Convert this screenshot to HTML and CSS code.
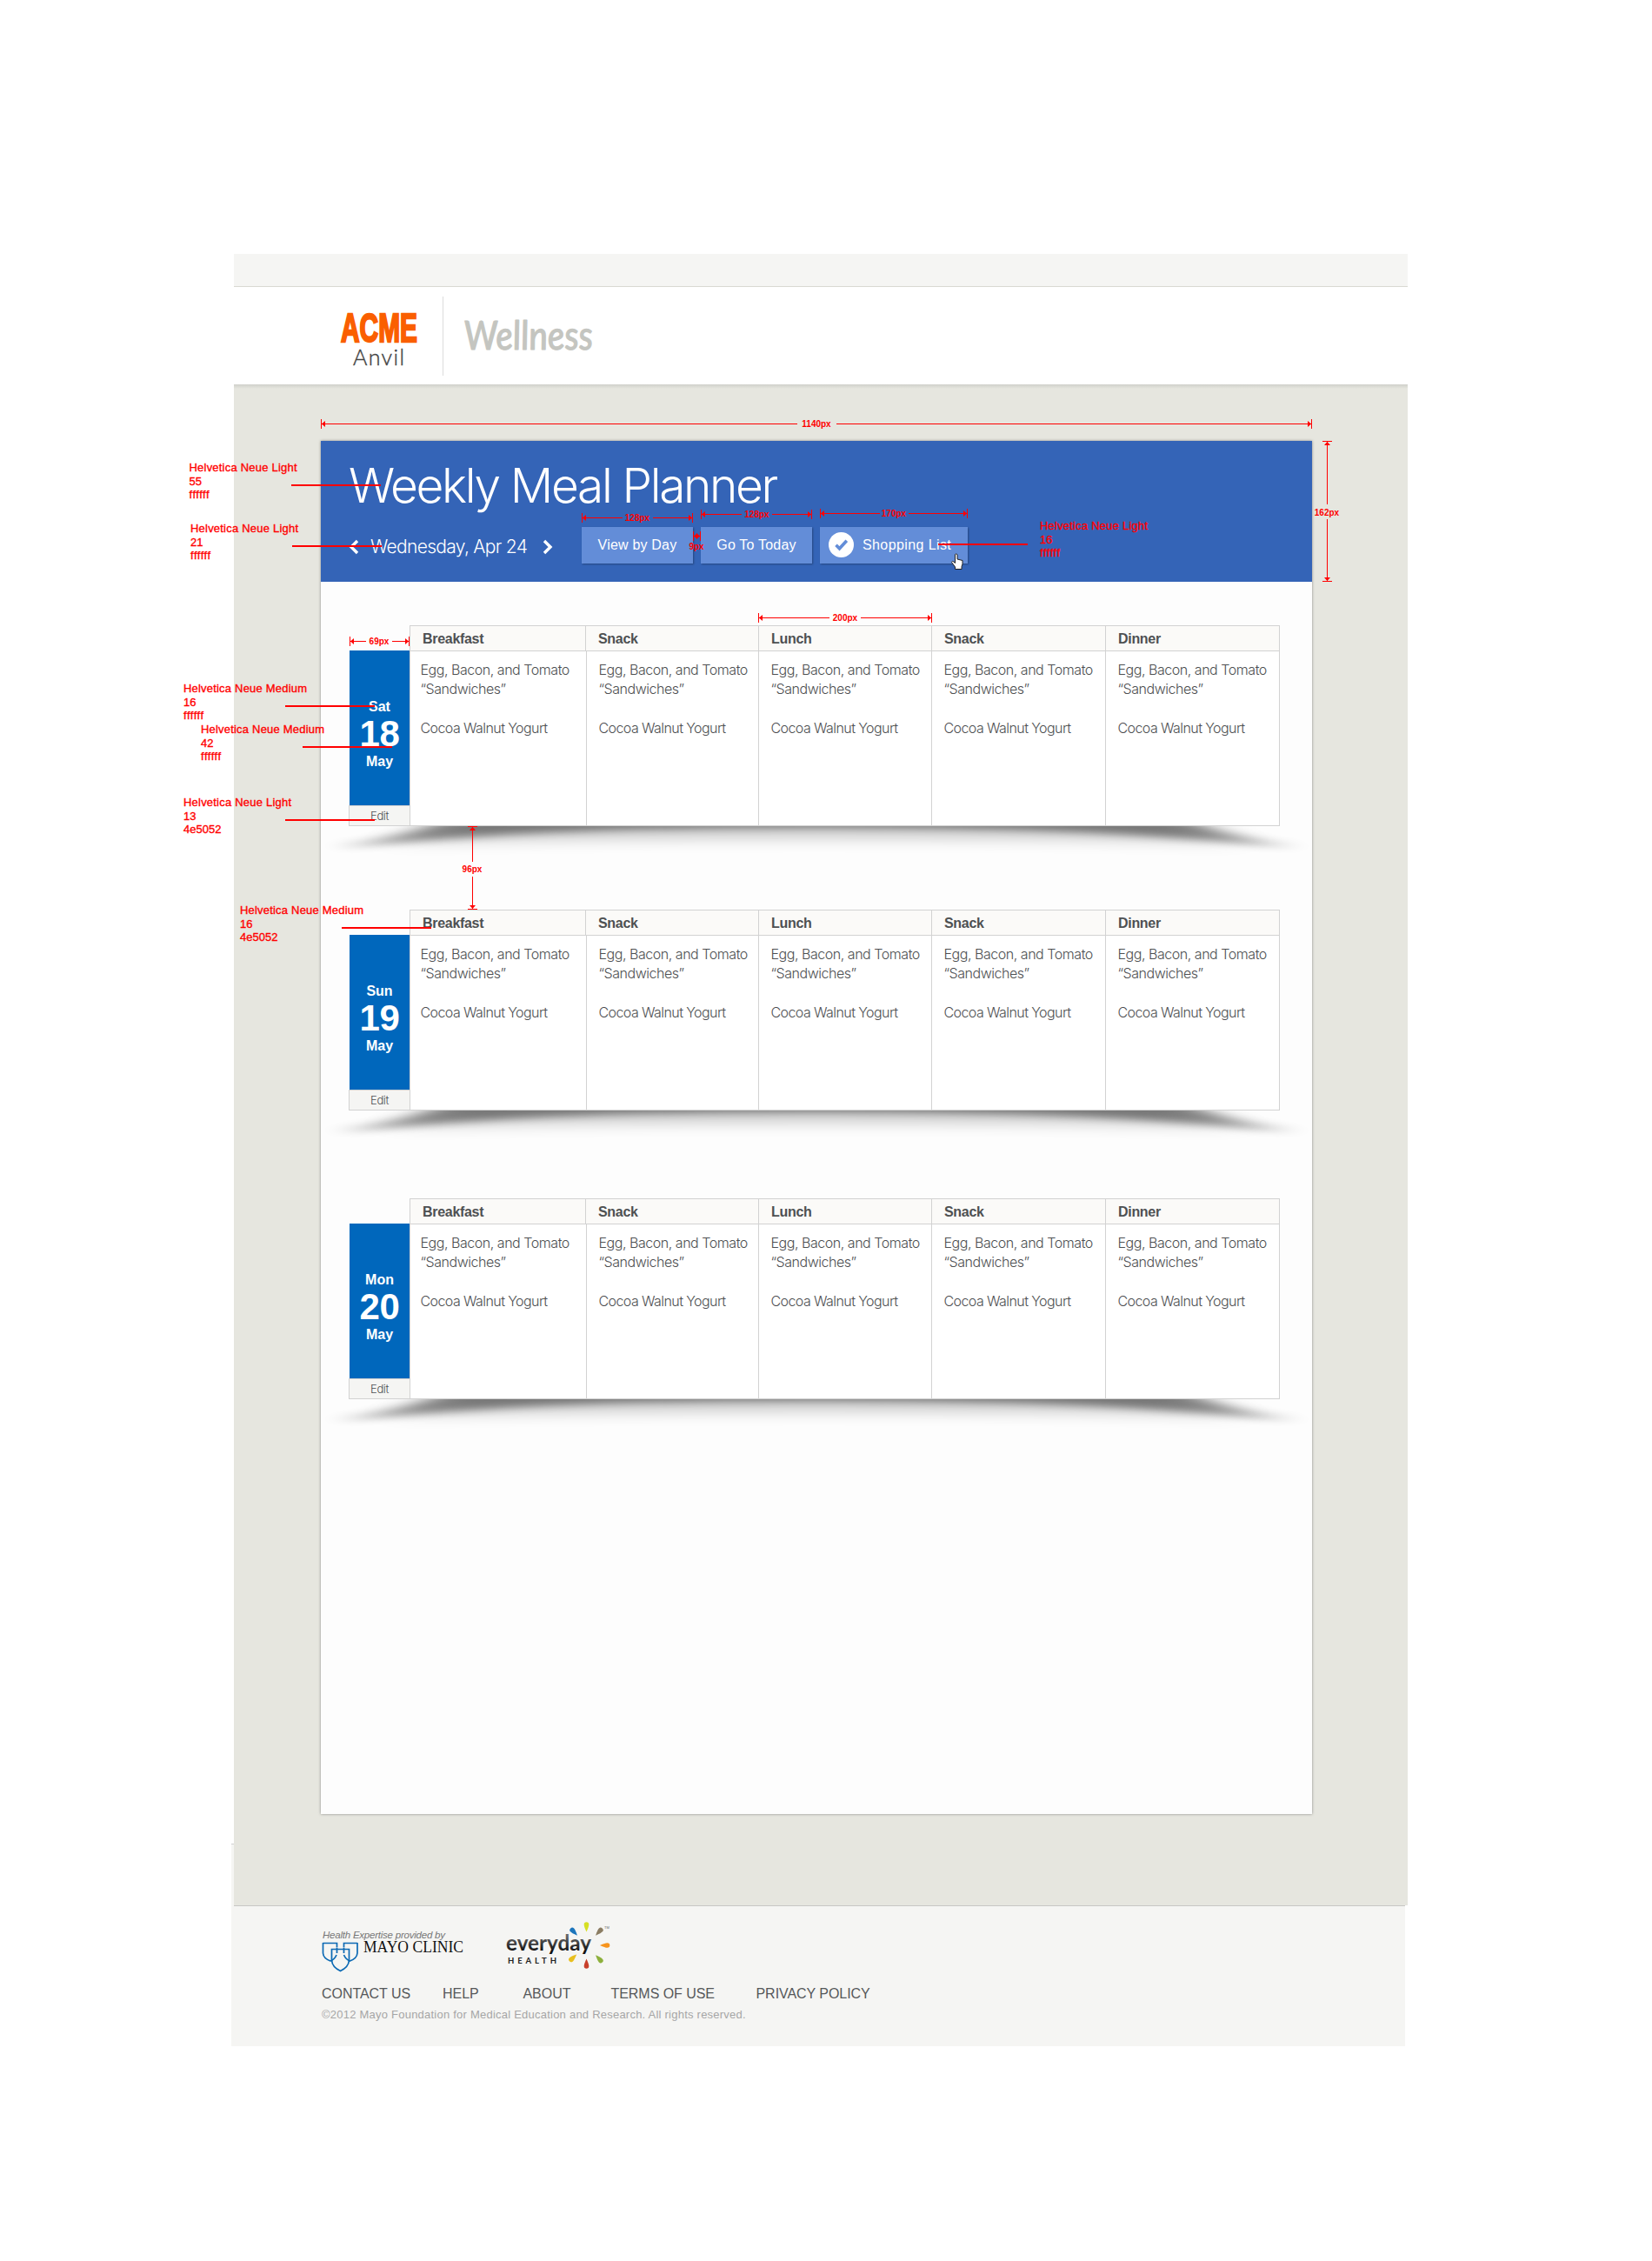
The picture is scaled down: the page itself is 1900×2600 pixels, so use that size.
FILE: index.html
```html
<!DOCTYPE html>
<html lang="en">
<head>
<meta charset="utf-8">
<title>Weekly Meal Planner</title>
<link rel="stylesheet" href="styles.css">
</head>
<body>
<div class="page">
  <div class="topbar"></div>
  <header class="site-header">
    <svg class="logo" width="100" height="90" viewBox="0 0 100 90">
      <text class="logo-acme" x="7" y="52" textLength="88" lengthAdjust="spacingAndGlyphs">ACME</text>
      <text class="logo-anvil" x="21" y="78.500" textLength="59">Anvil</text>
    </svg>
    <div class="divider"></div>
    <svg class="wellness" width="170" height="90" viewBox="0 0 170 90">
      <text transform="translate(10 61) skewX(5)" x="0" y="0" textLength="148" lengthAdjust="spacingAndGlyphs">Wellness</text>
    </svg>
  </header>

  <main class="main">
    <section class="planner">
      <div class="banner">
        <h1>Weekly Meal Planner</h1>
        <div class="toolbar">
          <svg class="chev" width="12" height="18" viewBox="0 0 12 18"><path d="M10 2 3 9l7 7"/></svg>
          <span class="current">Wednesday, Apr 24</span>
          <svg class="chev" width="12" height="18" viewBox="0 0 12 18"><path d="m2 2 7 7-7 7"/></svg>
          <div class="buttons">
            <a class="btn">View by Day</a>
            <a class="btn">Go To Today</a>
            <a class="btn btn-list">
              <svg width="29" height="29" viewBox="0 0 29 29"><circle cx="14.5" cy="14.5" r="14.5" fill="#fff"/><path d="m8.5 14.8 4 4 8.3-9" fill="none" stroke="#638dd8" stroke-width="3.6"/></svg>
              Shopping List
            </a>
          </div>
        </div>
      </div>

      <div class="days">
        <article class="day">
          <svg class="lift" width="1140" height="50" viewBox="0 0 1140 50"><use href="#lift"/></svg>
          <div class="side">
            <div class="date"><span>Sat</span><b>18</b><span>May</span></div>
            <a class="edit">Edit</a>
          </div>
          <div class="meals">
            <div class="heads"><div>Breakfast</div><div>Snack</div><div>Lunch</div><div>Snack</div><div>Dinner</div></div>
            <div class="cells">
              <div><p>Egg, Bacon, and Tomato<br>“Sandwiches”</p><p>Cocoa Walnut Yogurt</p></div>
              <div><p>Egg, Bacon, and Tomato<br>“Sandwiches”</p><p>Cocoa Walnut Yogurt</p></div>
              <div><p>Egg, Bacon, and Tomato<br>“Sandwiches”</p><p>Cocoa Walnut Yogurt</p></div>
              <div><p>Egg, Bacon, and Tomato<br>“Sandwiches”</p><p>Cocoa Walnut Yogurt</p></div>
              <div><p>Egg, Bacon, and Tomato<br>“Sandwiches”</p><p>Cocoa Walnut Yogurt</p></div>
            </div>
          </div>
        </article>

        <article class="day">
          <svg class="lift" width="1140" height="50" viewBox="0 0 1140 50"><use href="#lift"/></svg>
          <div class="side">
            <div class="date"><span>Sun</span><b>19</b><span>May</span></div>
            <a class="edit">Edit</a>
          </div>
          <div class="meals">
            <div class="heads"><div>Breakfast</div><div>Snack</div><div>Lunch</div><div>Snack</div><div>Dinner</div></div>
            <div class="cells">
              <div><p>Egg, Bacon, and Tomato<br>“Sandwiches”</p><p>Cocoa Walnut Yogurt</p></div>
              <div><p>Egg, Bacon, and Tomato<br>“Sandwiches”</p><p>Cocoa Walnut Yogurt</p></div>
              <div><p>Egg, Bacon, and Tomato<br>“Sandwiches”</p><p>Cocoa Walnut Yogurt</p></div>
              <div><p>Egg, Bacon, and Tomato<br>“Sandwiches”</p><p>Cocoa Walnut Yogurt</p></div>
              <div><p>Egg, Bacon, and Tomato<br>“Sandwiches”</p><p>Cocoa Walnut Yogurt</p></div>
            </div>
          </div>
        </article>

        <article class="day day-last">
          <svg class="lift" width="1140" height="50" viewBox="0 0 1140 50"><use href="#lift"/></svg>
          <div class="side">
            <div class="date"><span>Mon</span><b>20</b><span>May</span></div>
            <a class="edit">Edit</a>
          </div>
          <div class="meals">
            <div class="heads"><div>Breakfast</div><div>Snack</div><div>Lunch</div><div>Snack</div><div>Dinner</div></div>
            <div class="cells">
              <div><p>Egg, Bacon, and Tomato<br>“Sandwiches”</p><p>Cocoa Walnut Yogurt</p></div>
              <div><p>Egg, Bacon, and Tomato<br>“Sandwiches”</p><p>Cocoa Walnut Yogurt</p></div>
              <div><p>Egg, Bacon, and Tomato<br>“Sandwiches”</p><p>Cocoa Walnut Yogurt</p></div>
              <div><p>Egg, Bacon, and Tomato<br>“Sandwiches”</p><p>Cocoa Walnut Yogurt</p></div>
              <div><p>Egg, Bacon, and Tomato<br>“Sandwiches”</p><p>Cocoa Walnut Yogurt</p></div>
            </div>
          </div>
        </article>
      </div>
    </section>
  </main>

  <footer class="site-footer">
    <div class="partners">
      <svg width="170" height="62" viewBox="0 0 170 62">
        <text class="tag" x="1" y="21.5" textLength="141">Health Expertise provided by</text>
        <g fill="none" stroke="#0d6ab4" stroke-width="1.7">
          <path d="M1.5 27.5h16v5M1.5 27V39Q2 45 10 48Q15 46 17 41M17.500 33V39"/>
          <path d="M41 27.500H25.500v5M41 27V39Q40.500 45 32.500 48Q27.500 46 25.500 41M25.500 33V39"/>
          <path d="M11.500 47V34.500H31.500V47Q31 55 21.500 59.500Q12 55 11.500 47Z"/>
        </g>
        <text class="mayo" x="48" y="38" textLength="115" lengthAdjust="spacingAndGlyphs">MAYO CLINIC</text>
      </svg>
      <svg class="everyday" width="130" height="62" viewBox="0 0 130 62">
        <defs>
          <linearGradient id="ink" x1="0" y1="0" x2="0" y2="1"><stop offset=".25" stop-color="#666"/><stop offset=".85" stop-color="#111"/></linearGradient>
          <path id="petal" d="M0-15.500 Q-3-22-2.800-24A2.800 2.800 0 0 1 2.800-24Q3-22 0-15.500Z"/>
        </defs>
        <text class="eh" x="1" y="36" textLength="98" lengthAdjust="spacingAndGlyphs" fill="url(#ink)">everyday</text>
        <text class="health" x="3" y="51" textLength="56">HEALTH</text>
        <g transform="translate(93.500 30)">
          <use href="#petal" fill="#d6df23"/>
          <use href="#petal" fill="#8b7d63" transform="rotate(43)"/>
          <use href="#petal" fill="#f7941d" transform="rotate(90)"/>
          <use href="#petal" fill="#8db03c" transform="rotate(137)"/>
          <use href="#petal" fill="#c8402b" transform="rotate(180)"/>
          <use href="#petal" fill="#e8bf1f" transform="rotate(-133)"/>
          <use href="#petal" fill="#1c75bc" transform="rotate(-43)"/>
        </g>
        <text class="tm" x="114" y="11">TM</text>
      </svg>
    </div>
    <nav class="links"><a>CONTACT US</a><a>HELP</a><a>ABOUT</a><a>TERMS OF USE</a><a>PRIVACY POLICY</a></nav>
    <p class="copy">©2012 Mayo Foundation for Medical Education and Research. All rights reserved.</p>
  </footer>
</div>

<!-- Design annotations laid over the page -->
<svg class="notes" width="1900" height="2600" viewBox="0 0 1900 2600">
  <defs>
    <filter id="soft" x="-10%" y="-150%" width="120%" height="400%"><feGaussianBlur stdDeviation="14 4.5"/></filter>
    <filter id="softer" x="-10%" y="-150%" width="120%" height="400%"><feGaussianBlur stdDeviation="22 9"/></filter>
    <g id="lift">
      <path d="M60 18C120 12 140 0 170-16H970C1000 0 1020 12 1080 18Q900 13 570 13T60 18Z" fill="#000" opacity=".22" filter="url(#softer)"/>
      <path d="M18 24C80 15 115 4 145-8H995C1025 4 1060 15 1122 24C1040 19 960 9 800 4Q570-1 340 4C180 9 100 19 18 24Z" fill="#000" opacity=".4" filter="url(#soft)"/>
    </g>
    <marker id="end" viewBox="0 0 6 12" refX="5.500" refY="6" markerWidth="6" markerHeight="12" markerUnits="userSpaceOnUse" orient="auto-start-reverse">
      <path d="M1 2.500 5 6 1 9.500ZM5 .5h1v11H5Z" fill="#f00"/>
    </marker>
  </defs>
  <g class="dims">
    <path d="M369.500 487.500H917"/><path d="M1508.500 487.500H962"/>
    <path d="M1526.500 507.500V580"/><path d="M1526.500 668.500V597"/>
    <path d="M402.500 737.500H421"/><path d="M470.500 737.500H451"/>
    <path d="M872.500 710.500H954"/><path d="M1071.500 710.500H990"/>
    <path d="M543.500 950.500V991"/><path d="M543.500 1045.500V1008"/>
    <path d="M669.500 595.500H716"/><path d="M796.500 595.500H751"/>
    <path d="M806.500 591.500H853"/><path d="M933.500 591.500H888"/>
    <path d="M943.500 590.500H1012"/><path d="M1112.500 590.500H1045"/>
    <path d="M797.500 616.500H801"/><path d="M805.500 616.500H801"/>
  </g>
  <g class="dimtext">
    <text x="939" y="491">1140px</text><text x="1526" y="592.500">162px</text><text x="436" y="740.500">69px</text>
    <text x="972" y="713.500">200px</text><text x="543" y="1002.500">96px</text><text x="733" y="599">128px</text>
    <text x="870.500" y="595">128px</text><text x="1028" y="594">170px</text><text x="801" y="632">9px</text>
  </g>
  <path class="leads" d="M335 558h103M336 628h103M1079 626h103M328 812h103M348 859h103M328 943h103M393 1067h103"/>
  <g class="labels">
    <text x="217.500" y="542" textLength="124">Helvetica Neue Light</text><text x="217.500" y="557.500">55</text><text x="217.500" y="573" textLength="23">ffffff</text>
    <text x="219" y="612" textLength="124">Helvetica Neue Light</text><text x="219" y="627.500">21</text><text x="219" y="643" textLength="23">ffffff</text>
    <text x="1196" y="609" textLength="124">Helvetica Neue Light</text><text x="1196" y="624.500">16</text><text x="1196" y="640" textLength="23">ffffff</text>
    <text x="211" y="796" textLength="142">Helvetica Neue Medium</text><text x="211" y="811.500">16</text><text x="211" y="827" textLength="23">ffffff</text>
    <text x="231" y="843" textLength="142">Helvetica Neue Medium</text><text x="231" y="859">42</text><text x="231" y="874" textLength="23">ffffff</text>
    <text x="211" y="927" textLength="124">Helvetica Neue Light</text><text x="211" y="942.500">13</text><text x="211" y="958">4e5052</text>
    <text x="276" y="1051" textLength="142">Helvetica Neue Medium</text><text x="276" y="1066.500">16</text><text x="276" y="1082">4e5052</text>
  </g>
  <path d="M1098.500 637.500q1.500-1.500 2.500.3v5.200l6 1.500v4l-1 3v3h-7.500v-2.500l-4-5.500q.5-2 2.500-.5l1.500 1.500Z" fill="#fff" stroke="#222" stroke-width="1"/>
</svg>
</body>
</html>
```
FILE: styles.css
```css
* { box-sizing: border-box; }
body {
  margin: 0;
  background: #fff;
  font-family: "Liberation Sans", Arial, sans-serif;
  color: #4e5052;
  position: relative;
  height: 2600px;
}
.page { width: 1350px; margin-left: 269px; padding-top: 292px; }

.topbar { height: 38px; background: #f5f5f3; border-bottom: 1px solid #d9d9d2; }
.site-header { height: 112px; display: flex; align-items: flex-start; padding: 11px 0 0 116px; background: #fff; }
.site-header svg { overflow: visible; }
.logo-acme { font: bold 46px "Liberation Sans", sans-serif; fill: #fa5f00; stroke: #fa5f00; stroke-width: 2.4; }
.logo-anvil { font: 300 25px Lato, sans-serif; fill: #444; stroke: #444; stroke-width: .4; }
.divider { width: 1px; height: 91px; margin-left: 24px; background: #dcdcdc; }
.wellness { margin-left: 15px; }
.wellness text { font: italic 500 46px Lato, sans-serif; fill: #c4c5c0; stroke: #c4c5c0; stroke-width: 1; stroke-linejoin: round; }

.main {
  height: 1749px;
  padding: 65px 110px 0 100px;
  background: linear-gradient(#cfd0ca, #e6e6df 5px);
}
.planner { height: 1579px; background: #fdfdfd; box-shadow: 0 0 3px rgba(0, 0, 0, .4); }
.banner { height: 162px; padding: 21px 32px 21px; background: #3464b7; color: #fff; }
h1 { margin: 0 0 18px; font: 300 55px/60px Inter, sans-serif; letter-spacing: -2.35px; white-space: nowrap; }
.toolbar { display: flex; align-items: center; height: 42px; }
.chev { margin-top: 4px; }
.chev path { fill: none; stroke: #fff; stroke-width: 3.4; }
.current { width: 198px; padding: 3px 0 0 13px; font: 300 21px/24px Inter, sans-serif; letter-spacing: -.68px; white-space: nowrap; }
.chev + .current + .chev { margin-left: 13px; }
.buttons { display: flex; gap: 9px; margin-left: 33px; }
.btn {
  display: flex; align-items: center; justify-content: center;
  width: 128px; height: 42px; padding-bottom: 1px;
  background: #638dd8; box-shadow: 1px 1px 2px rgba(0, 0, 0, .3);
  font-size: 16px; letter-spacing: .2px; white-space: nowrap;
}
.btn-list { width: 170px; justify-content: flex-start; gap: 10px; padding-left: 10px; letter-spacing: .4px; }

.days { display: grid; gap: 96px; padding: 50px 37px 0 32px; }
.day { position: relative; display: grid; grid-template-columns: 70px 1001px; height: 231px; }
.day-last { margin-top: 5px; }
.lift { position: absolute; left: -32px; top: 231px; overflow: hidden; }
.side, .meals { position: relative; }
.side { padding-top: 29px; }
.date {
  display: flex; flex-direction: column; align-items: center;
  height: 178px; margin-left: 1px; padding-top: 55px;
  background: #0067bc; color: #fff; font: bold 16px/20px "Liberation Sans", sans-serif;
}
.date b { font-size: 42px; line-height: 42px; letter-spacing: -.3px; }
.date b + span { margin-top: 1px; }
.edit {
  display: block; height: 24px; background: #f5f5f3; border: 1px solid #d2d2d2; border-right: 0;
  font: 300 13px/23px Inter, sans-serif; letter-spacing: -.4px; text-align: center;
}
.meals { border: 1px solid #d2d2d2; border-left: 0; background: #fff; }
.heads, .cells { display: grid; }
.heads { grid-template-columns: 202px 199px 199px 200px 200px; height: 29px; background: #fbfaf8; border-bottom: 1px solid #d2d2d2; }
.heads div { padding: 1px 0 0 14px; border-left: 1px solid #d2d2d2; font: bold 16px/28px "Liberation Sans", sans-serif; letter-spacing: -.3px; }
.cells { grid-template-columns: 203px 198px 199px 200px 200px; height: 200px; }
.cells > div { padding: 10px 0 0 13.500px; border-left: 1px solid #d2d2d2; font: 300 16px/22.300px Inter, sans-serif; letter-spacing: -.46px; white-space: nowrap; }
.cells > div:first-child { padding-left: 11.500px; }
.cells p { margin: 0 0 22.300px; }
.cells p + p { letter-spacing: -.58px; }

.site-footer { position: relative; height: 162px; margin-left: -3px; width: 1350px; padding: 16px 0 0 104px; background: #f5f5f3; }
.site-footer::before { content: ""; position: absolute; left: 3px; right: 0; top: 0; height: 1px; background: #c6c6c4; }
.site-footer::after { content: ""; position: absolute; left: 0; top: -71px; width: 3px; height: 71px; background: #f5f5f3; border-top: 1px solid #d2d2d2; }
.partners { display: flex; gap: 41px; height: 62px; }
.tag { font: italic 11.500px "Liberation Sans", sans-serif; fill: #777; }
.mayo { font: 18.500px "Liberation Serif", serif; fill: #111; }
.eh { font: bold 24px Lato, sans-serif; }
.health { font: bold 9.500px Lato, sans-serif; fill: #222; }
.tm { font: 4px "Liberation Sans", sans-serif; fill: #666; }
.links { display: flex; margin-top: 14px; font-size: 16px; line-height: 20px; letter-spacing: -.05px; white-space: nowrap; color: #55585a; }
.links a:nth-child(1) { width: 139px; }
.links a:nth-child(2) { width: 92.500px; }
.links a:nth-child(3) { width: 101px; }
.links a:nth-child(4) { width: 167px; }
.copy { margin: 5px 0 0; font-size: 13px; line-height: 18px; letter-spacing: .23px; color: #a6a6a6; }

.notes { position: absolute; left: 0; top: 0; pointer-events: none; }
.dims path { fill: none; stroke: #f00; stroke-width: 1; marker-start: url(#end); }
.dimtext text { font: bold 10px "Liberation Sans", sans-serif; fill: #f00; text-anchor: middle; }
.leads { stroke: #f00; stroke-width: 2; }
.labels text { font: 13px "Liberation Sans", sans-serif; fill: #f00; stroke: #f00; stroke-width: .35; }
```
